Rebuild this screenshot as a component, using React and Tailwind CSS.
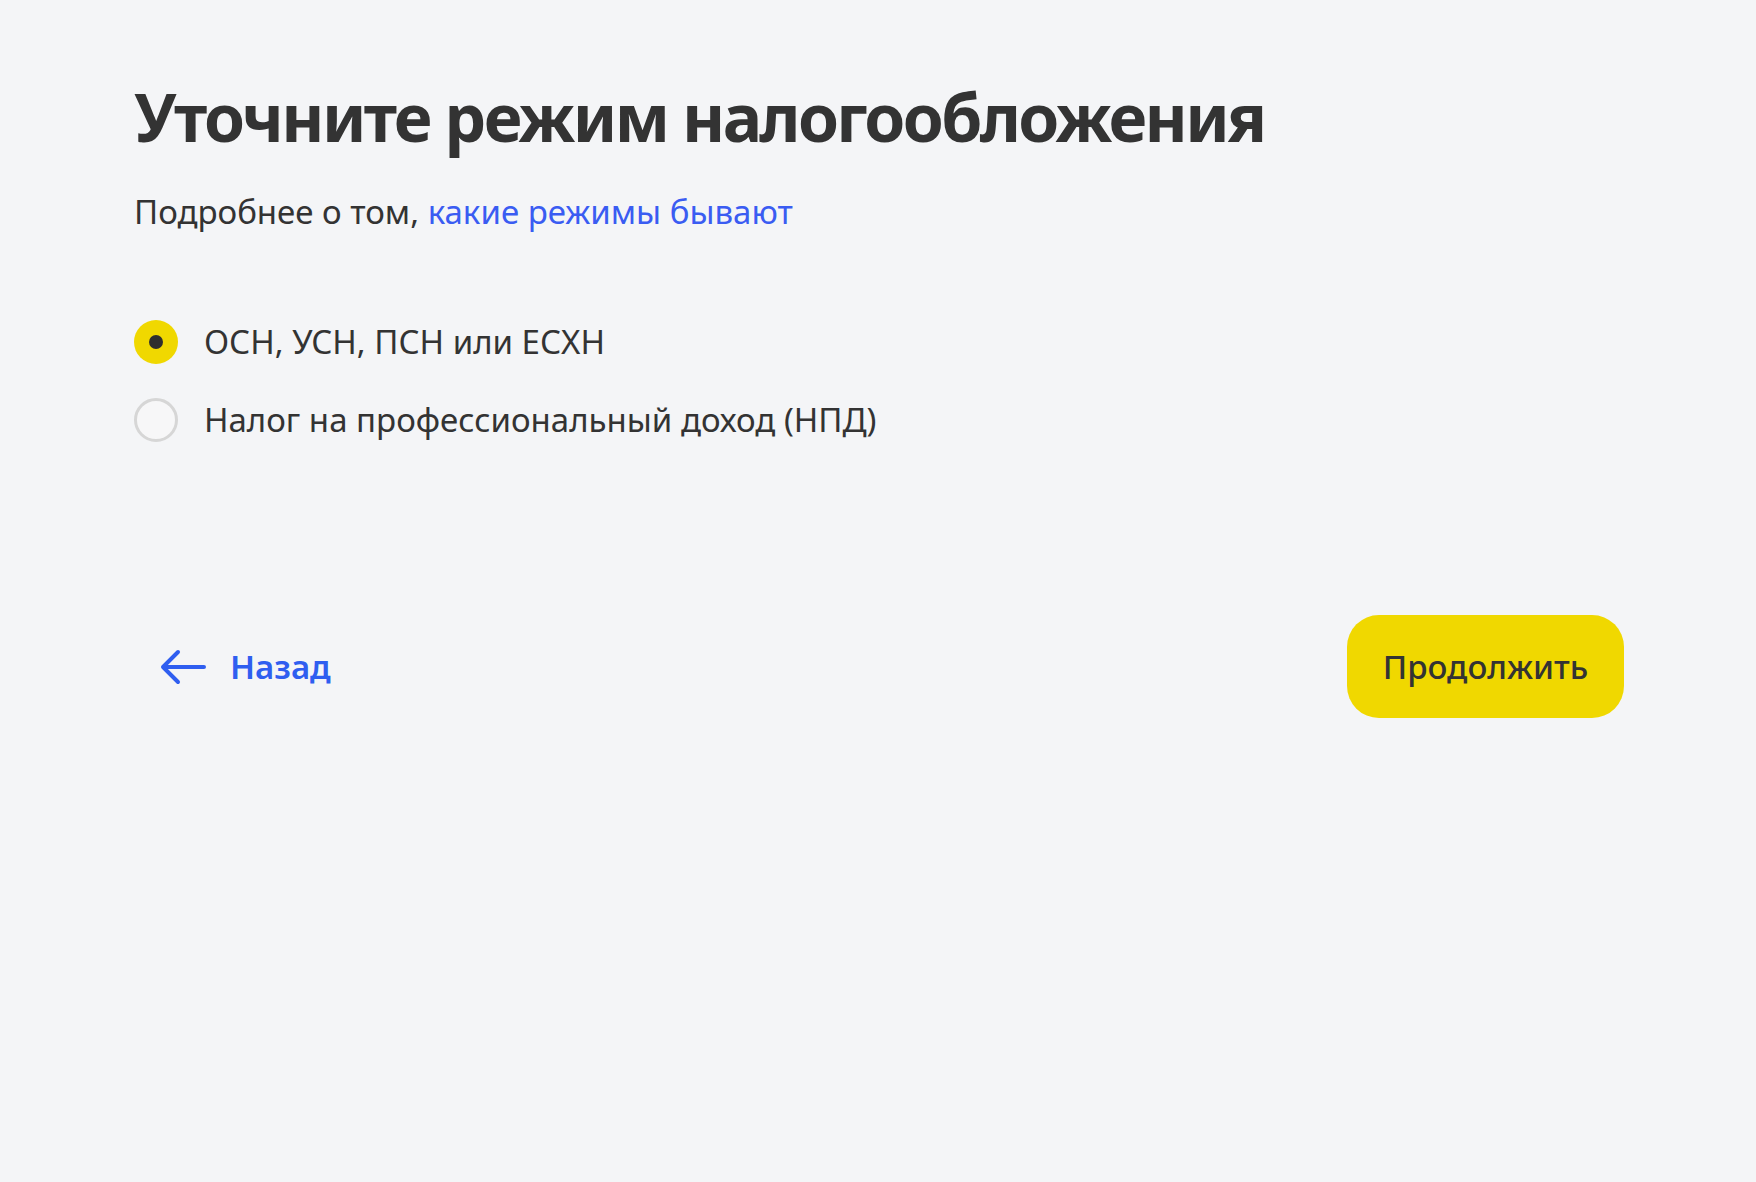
import { useState } from "react";

const options = [
  { id: "osn", label: "ОСН, УСН, ПСН или ЕСХН" },
  { id: "npd", label: "Налог на профессиональный доход (НПД)" },
];

export default function App() {
  const [mode, setMode] = useState("osn");

  return (
    <div
      className="min-h-screen bg-[#f4f5f7] text-[#333333]"
      style={{ fontFamily: '"Noto Sans", "Open Sans", sans-serif' }}
    >
      <div className="pl-[134px] pr-[132px] pt-[76px]">
        <h1 className="text-[66px] leading-[80px] font-bold tracking-[-2.6px] text-[#333333]">
          Уточните режим налогообложения
        </h1>

        <p className="mt-[36px] text-[33px] leading-[40px] text-[#333333]">
          Подробнее о том,{" "}
          <a href="#" className="text-[#3a5cf2]">
            какие режимы бывают
          </a>
        </p>

        {/* Radio group */}
        <div className="mt-[88px] flex flex-col gap-[34px]">
          {options.map((opt) => {
            const checked = mode === opt.id;
            return (
              <label
                key={opt.id}
                className="flex items-center gap-[26px] cursor-pointer"
                onClick={() => setMode(opt.id)}
              >
                {checked ? (
                  <span className="w-[44px] h-[44px] rounded-full bg-[#f0d800] flex items-center justify-center">
                    <span className="w-[14px] h-[14px] rounded-full bg-[#2e2e2e]" />
                  </span>
                ) : (
                  <span className="w-[44px] h-[44px] rounded-full border-[3px] border-[#d6d6d6] bg-[#f7f7f8]" />
                )}
                <span className="text-[33px] leading-[44px] text-[#333333]">
                  {opt.label}
                </span>
              </label>
            );
          })}
        </div>

        {/* Footer actions */}
        <div className="mt-[173px] flex items-center justify-between">
          <button className="flex items-center gap-[24px] pl-[26px] text-[#2f5ef0]">
            <svg width="46" height="36" viewBox="0 0 46 36" fill="none">
              <path
                d="M44 18H3M18 3L3 18l15 15"
                stroke="currentColor"
                strokeWidth="4"
                strokeLinecap="round"
                strokeLinejoin="round"
              />
            </svg>
            <span className="text-[33px] font-semibold">Назад</span>
          </button>

          <button className="w-[277px] h-[103px] rounded-[32px] bg-[#f0d800] text-[33px] font-medium text-[#333333]">
            Продолжить
          </button>
        </div>
      </div>
    </div>
  );
}
